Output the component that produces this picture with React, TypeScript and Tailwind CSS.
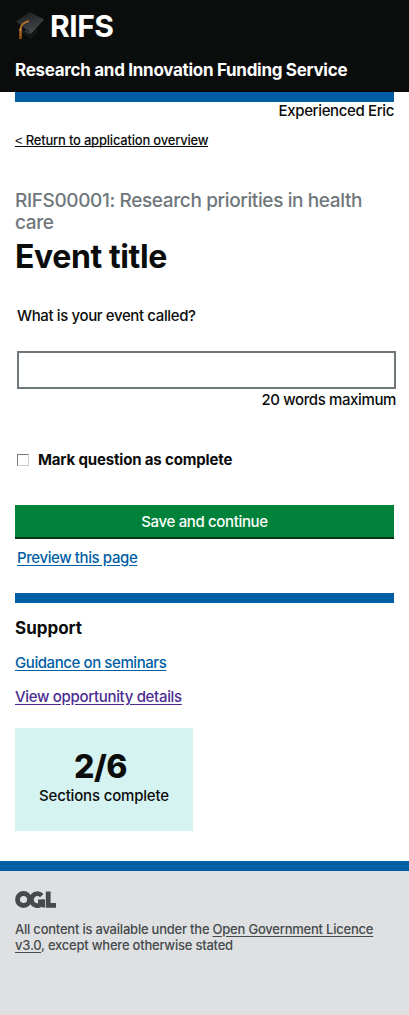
import React from "react";

function CapIcon() {
  return (
    <svg width="30" height="32" viewBox="0 0 30 32" className="block" aria-hidden="true">
      <defs>
        <linearGradient id="board" x1="0.2" y1="0" x2="0.6" y2="1">
          <stop offset="0" stopColor="#1c1d1f" />
          <stop offset="1" stopColor="#47484a" />
        </linearGradient>
      </defs>
      <path d="M6 16v7l10 6 6-5v-7l-7 5z" fill="#151617" />
      <path d="M1 11.5 14.5 2 28.500 9 16 23z" fill="url(#board)" />
      <path d="M10 21 15.500 23.500 28.500 9.500" fill="none" stroke="#57585a" strokeWidth="0.8" />
      <path d="M14 11 Q6 13 5.500 19" fill="none" stroke="#b87527" strokeWidth="1.800" />
      <path d="M5.500 18v9" fill="none" stroke="#b8691a" strokeWidth="2.200" />
      <path d="M4.200 20h2.600" stroke="#c9a05c" strokeWidth="1" />
      <path d="M4.500 26 4 29h3l-0.500-3z" fill="#8a4c12" />
    </svg>
  );
}

function OglLogo() {
  return (
    <svg width="41" height="17" viewBox="0 0 41 17" className="block" role="img" aria-label="Open Government Licence">
      <g fill="none" stroke="#454a4c" strokeWidth="4.800">
        <circle cx="8.500" cy="8.500" r="6" />
        <path d="M26.800 4.600A6 6 0 1 0 27.400 12" />
        <path d="M23 10.200H29" strokeWidth="3.400" />
        <path d="M33.200 0.500V14.300H41" />
      </g>
      <path d="M26 8.500h4v8h-2.600l-2-2.500z" fill="#454a4c" />
    </svg>
  );
}

export default function App() {
  return (
    <div className="min-h-[1015px] bg-white font-['Inter',sans-serif] font-medium text-[#0b0c0c] whitespace-nowrap">
      <header className="h-[92px] bg-[#0b0c0c] px-[15px] pt-2 text-white">
        <div className="flex h-9 items-center">
          <CapIcon />
          <span className="pl-[5px] text-[30px] leading-9 font-bold tracking-[-0.5px]">RIFS</span>
        </div>
        <div className="pt-4 text-[17px] leading-5 font-bold tracking-[-0.29px]">
          Research and Innovation Funding Service
        </div>
      </header>

      <main className="px-[15px]">
        <div className="h-[10px] bg-[#005ea5]" />
        <div className="text-right text-[15px] leading-[18px] tracking-[-0.37px]">Experienced Eric</div>
        <div className="mt-[11px] text-[13px] leading-[18px] tracking-[-0.2px]">
          <a href="#" className="inline-block h-4 border-b border-[#0b0c0c]">
            <span className="font-['Liberation_Sans'] font-normal">&lt;</span> Return to application overview
          </a>
        </div>

        <h1 className="mt-[41px]">
          <span className="block text-[19px] leading-[22px] tracking-[-0.38px] text-[#6f777b]">
            RIFS00001: Research priorities in health
            <br />
            care
          </span>
          <span className="mt-[5px] block text-[32px] leading-9 font-bold tracking-[-0.4px]">Event title</span>
        </h1>

        <form className="-mr-0.5 pl-0.5" onSubmit={(e) => e.preventDefault()}>
          <label htmlFor="title" className="mt-[31px] block text-[15px] leading-5 tracking-[-0.38px]">
            What is your event called?
          </label>
          <input id="title" type="text" className="mt-[25px] block h-[38px] w-full border-2 border-[#6f777b] px-2 outline-none" />
          <div className="mt-px text-right text-[15px] leading-5 tracking-[-0.38px]">20 words maximum</div>
          <label className="mt-10 flex h-5 items-center text-[15px] leading-5 font-bold tracking-[-0.16px]">
            <input
              type="checkbox"
              className="mr-[9px] h-3 w-3 appearance-none border border-t-[#777] border-r-[#ccc] border-b-[#ccc] border-l-[#777] bg-white"
            />
            <span>Mark question as complete</span>
          </label>
        </form>

        <button className="mt-[35px] block h-[34px] w-full border-b-2 border-[#003618] bg-[#00823b] pt-px text-center text-[15px] leading-[31px] font-medium tracking-[-0.35px] text-white">
          Save and continue
        </button>
        <div className="mt-[9px] pl-0.5 text-[15px] leading-5 tracking-[-0.4px] text-[#005ea5]">
          <a href="#" className="underline underline-offset-2">Preview this page</a>
        </div>

        <aside className="mt-[25px] border-t-[10px] border-[#005ea5]">
          <h2 className="mt-[15px] text-[17px] leading-5 font-bold">Support</h2>
          <p className="mt-[15px] text-[15px] leading-5 tracking-[-0.42px] text-[#005ea5]">
            <a href="#" className="underline underline-offset-2">Guidance on seminars</a>
          </p>
          <p className="mt-[14px] text-[15px] leading-5 tracking-[-0.32px] text-[#4c2c92]">
            <a href="#" className="underline underline-offset-2">View opportunity details</a>
          </p>
          <div className="mt-[21px] h-[103px] w-[178px] bg-[#d5f3f1] pt-[21px] text-center">
            <div className="pr-[7px] text-[32px] leading-9 font-extrabold tracking-[-0.5px]">2/6</div>
            <div className="mt-px text-[15px] leading-5 tracking-[-0.18px]">Sections complete</div>
          </div>
        </aside>
      </main>

      <footer className="mt-[30px] h-[154px] border-t-[10px] border-[#005ea5] bg-[#dee0e2] px-[15px] pt-5 text-[13px] leading-4 tracking-[-0.22px] text-[#454a4c]">
        <OglLogo />
        <p className="mt-[13px]">
          <span>
            All content is available under the{" "}
            <a href="#" className="underline underline-offset-2">
              Open Government Licence
              <br />
              v3.0
            </a>
          </span>
          <span>, except where otherwise stated</span>
        </p>
      </footer>
    </div>
  );
}
